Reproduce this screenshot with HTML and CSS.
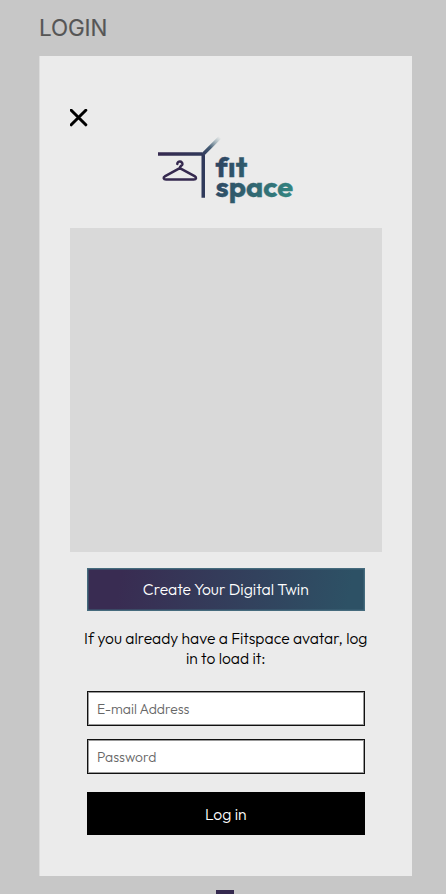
FILE: index.html
```html
<!DOCTYPE html>
<html lang="en">
<head>
<meta charset="utf-8">
<title>Fitspace login</title>
<link rel="stylesheet" href="styles.css">
</head>
<body>
<h1 class="frame-label">LOGIN</h1>
<main class="panel">
  <button class="close" aria-label="Close">
    <svg width="18" height="18" viewBox="0 0 18 18"><path d="M1.2 1.2 15.8 15.8M15.8 1.2 1.2 15.8" stroke="#000" stroke-width="3" stroke-linecap="round"/></svg>
  </button>
  <svg class="logo" width="138" height="72" viewBox="156 135 138 72">
    <defs>
      <linearGradient id="ink" gradientUnits="userSpaceOnUse" x1="158" y1="150" x2="206" y2="160"><stop stop-color="#35294f"/><stop offset="1" stop-color="#303a5b"/></linearGradient>
      <linearGradient id="ray" gradientUnits="userSpaceOnUse" x1="203" y1="154" x2="220" y2="137"><stop stop-color="#303a5b"/><stop offset=".4" stop-color="#465e76"/><stop offset="1" stop-color="#70949d" stop-opacity="0"/></linearGradient>
      <linearGradient id="word" gradientUnits="userSpaceOnUse" x1="216" y1="165" x2="293" y2="190"><stop stop-color="#2e4562"/><stop offset="1" stop-color="#348580"/></linearGradient>
    </defs>
    <path d="M158 152.3H202L205 155.3V197.7H201.5V155.8H158Z" fill="url(#ink)"/>
    <path d="M203.3 154.1 219.8 137.6" stroke="url(#ray)" stroke-width="3.5"/>
    <path d="M177.3 163.9C177.5 160.5 182.7 161 182.4 164.2C182.1 166 179.8 165.6 179.8 168.2L165.2 176.1C162.6 177.7 163.6 179.6 166 179.6H193.8C196.2 179.6 197 177.7 194.6 176.1L179.8 168.2" fill="none" stroke="#35294f" stroke-width="2.5" stroke-linecap="round" stroke-linejoin="round"/>
    <g class="wordmark" fill="url(#word)" stroke="url(#word)" stroke-width=".3">
      <text x="215.5" y="176.8" textLength="31.7" lengthAdjust="spacingAndGlyphs">fıt</text>
      <text x="215.6" y="197" textLength="77.6" lengthAdjust="spacingAndGlyphs">space</text>
    </g>
  </svg>
  <div class="preview"></div>
  <form class="form">
    <button type="button" class="btn create">Create Your Digital Twin</button>
    <p class="hint"><span class="line first">If you already have a Fitspace avatar, log</span> <span class="line second">in to load it:</span></p>
    <input class="field" type="email" placeholder="E-mail Address">
    <input class="field password" type="password" placeholder="Password">
    <button type="button" class="btn login">Log in</button>
  </form>
</main>
<div class="next-frame"></div>
</body>
</html>
```
FILE: styles.css
```css
* { box-sizing: border-box; }
body {
  margin: 0;
  height: 894px;
  overflow: hidden;
  background: #c7c7c7;
  font-family: Outfit, Lato, sans-serif;
}
.frame-label {
  margin: 0;
  padding: 14px 0 0 39px;
  height: 56px;
  font: 400 22.4px/28px Inter, sans-serif;
  letter-spacing: -.1px;
  color: #555;
  -webkit-text-stroke: .2px #666;
}
.panel {
  width: 372.8px;
  height: 820px;
  margin-left: 39.5px;
  padding: 52.5px 30px 0;
  display: flex;
  flex-direction: column;
  background: #ebebeb;
  box-shadow: -1px 0 0 #dcdcdc;
}
.close {
  width: 18px;
  height: 18px;
  padding: 0;
  border: 0;
  background: none;
}
.close svg, .logo { display: block; }
.logo { margin: 8.5px 0 0 86.5px; flex: none; }
.wordmark { font: 700 28.5px Outfit, Lato, sans-serif; }
.preview {
  height: 324px;
  margin-top: 21px;
  flex: none;
  background: #d9d9d9;
}
.form {
  display: flex;
  flex-direction: column;
  width: 277.5px;
  margin: 16px 0 0 17.5px;
}
.btn {
  height: 43px;
  padding: 0 0 1px;
  font: 300 15.7px Outfit, Lato, sans-serif;
  color: #fff;
}
.create {
  border: 1px solid #456b7d;
  background: linear-gradient(100deg, #392c52 12%, #2d5165 94%);
  box-shadow: inset 0 0 0 .5px #3f6478;
}
.hint {
  margin: 17px -10px 23px;
  font-size: 15.62px;
  font-weight: 300;
  line-height: 20px;
  text-align: center;
  white-space: nowrap;
}
.line { display: block; }
.field {
  height: 35px;
  padding: 1px 9px 0;
  border: 1px solid #111;
  border-radius: 0;
  background: #fff;
  box-shadow: inset 0 0 0 1px #999;
  font: 300 13.9px Outfit, Lato, sans-serif;
  outline: 0;
}
.field::placeholder { color: #666; opacity: 1; }
.password { margin-top: 13px; }
.login {
  margin-top: 18px;
  padding: 1px 0 0;
  border: 0;
  background: #000;
}
.next-frame {
  width: 17.5px;
  height: 4px;
  margin: 14px 0 0 216px;
  background: #35294f;
}
```
